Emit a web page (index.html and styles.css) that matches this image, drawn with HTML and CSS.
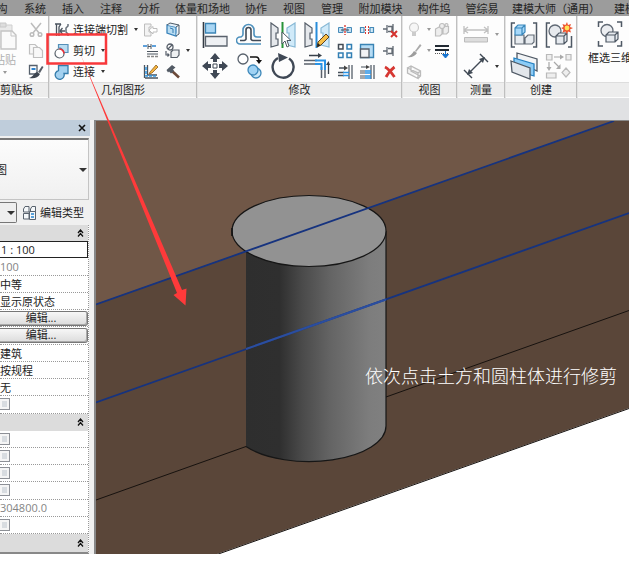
FILE: index.html
```html
<!DOCTYPE html>
<html lang="zh-CN">
<head>
<meta charset="utf-8">
<title>修改</title>
<link rel="stylesheet" href="styles.css">
</head>
<body>
<div class="app">
  <nav class="tabs">
    <a class="tab c1" href="#">构</a><a class="tab" href="#">系统</a><a class="tab" href="#">插入</a><a class="tab" href="#">注释</a><a class="tab" href="#">分析</a><a class="tab c5" href="#">体量和场地</a><a class="tab" href="#">协作</a><a class="tab" href="#">视图</a><a class="tab" href="#">管理</a><a class="tab c4" href="#">附加模块</a><a class="tab c3" href="#">构件坞</a><a class="tab c3" href="#">管综易</a><a class="tab c8" href="#">建模大师（通用）</a><a class="tab" href="#">建模</a>
  </nav>

  <div class="ribbon">
    <section class="panel clip">
      <div class="body">
        <button class="paste">
          <svg width="20" height="32" viewBox="0 0 20 32"><path d="M0 6H12V28H0" fill="#e9e9e9" stroke="#cfcfcf"/><path d="M0 4H6V8H0Z" fill="#ddd" stroke="#c8c8c8"/><path d="M1 12H12L16 16V30H1Z" fill="#fafafa" stroke="#c4c4c4" stroke-width="1.4"/><path d="M11 12V17H16" fill="none" stroke="#c4c4c4"/></svg>
          <span>粘贴</span><i class="dd dim"></i>
        </button>
        <div class="stack">
          <button aria-label="剪切到剪贴板"><svg width="16" height="16"><g fill="none" stroke="#bcbcbc" stroke-width="1.5"><path d="M3 1L11 11M13 1L5 11"/><circle cx="4" cy="12.5" r="1.8"/><circle cx="12" cy="12.5" r="1.8"/></g></svg></button>
          <button aria-label="复制到剪贴板"><svg width="16" height="16"><g fill="#f8f8f8" stroke="#c0c0c0" stroke-width="1.2"><path d="M1.5 1.5H7L10 4.500V11H1.500Z"/><path d="M5.500 4.500H11.500L14.500 7.500V14.500H5.500Z"/></g></svg></button>
          <button aria-label="匹配类型"><svg width="16" height="16"><path d="M1.500 1.500H9V10H1.500Z" fill="#fff" stroke="#56606c" stroke-width="1.300"/><path d="M3.500 4H7.500V6H3.500Z" fill="#2b82cf"/><path d="M10 8L14 2L15.500 3L12 9Z" fill="#555c66"/><path d="M9 8L12 10C10 14 6 15 1 14C5 13 6 9 9 8Z" fill="#3e4651"/></svg></button>
        </div>
      </div>
      <h2>剪贴板</h2>
    </section>

    <section class="panel geometry">
      <div class="body">
        <div class="stack labelled">
          <button><svg width="16" height="16"><path d="M1 2H7M2.500 2V14M5 14V5L7 2" fill="none" stroke="#4a535e" stroke-width="1.300"/><path d="M6 9H11M8.500 6L6 9L8.500 12" stroke="#4a535e" fill="none" stroke-width="1.300"/><path d="M14 2V4L12 6V10L14 12V14" stroke="#666f79" fill="none" stroke-width="1.500"/></svg><span>连接端切割</span><i class="dd"></i></button>
          <button><svg width="16" height="16"><path d="M4.500 1.500H14V9.500H9.500A4.500 4.500 0 0 0 4.500 5Z" fill="#b9dcf1" stroke="#548fb8" stroke-width="1.200"/><circle cx="5.500" cy="10.500" r="4.500" fill="#fff" stroke="#59626b" stroke-width="1.200"/><path d="M5.500 6A4.500 4.500 0 0 1 10 10.500" fill="none" stroke="#ef3038" stroke-width="1.600"/></svg><span>剪切</span><i class="dd"></i></button>
          <button><svg width="16" height="16"><path d="M4.500 6.500V1.500H14V9.500H10A4.500 4.500 0 1 1 4.500 6.500Z" fill="#a3d1f0" stroke="#347cab" stroke-width="1.300"/></svg><span>连接</span><i class="dd"></i></button>
        </div>
        <div class="stack mid">
          <button aria-label="连接端"><svg width="16" height="16"><path d="M1.500 2H8V5H6V10H8V14H1.500Z" fill="#f3f3f3" stroke="#bdbdbd"/><path d="M6 8L10 4.500V6.500H14V10H10V12Z" fill="#fff" stroke="#bdbdbd"/></svg></button>
          <button aria-label="梁柱连接"><svg width="16" height="16"><path d="M5 1V6M8 1V6M5 3.500H8" fill="none" stroke="#4d5660"/><path d="M0 3H4M13 3H9" stroke="#2b82cf" stroke-width="1.500"/><path d="M4 8.500H15M4 11H15" stroke="#4d5660"/><path d="M4 13.500H15" stroke="#888" stroke-width="1.500" stroke-dasharray="3 1"/></svg></button>
          <button aria-label="墙连接"><svg width="16" height="16"><path d="M1.500 1V14M4.500 1V11H14M2 14H15" fill="none" stroke="#4b5560" stroke-width="1.300"/><path d="M3 3V12H13" fill="none" stroke="#3298e1" stroke-width="1.500" stroke-dasharray="3 1"/><path d="M7 8L13 1L15 3L9 9L6 10Z" fill="#f6b440" stroke="#8d621f" stroke-width=".8"/></svg></button>
        </div>
        <div class="stack end">
          <button aria-label="拆分面"><svg width="16" height="16"><path d="M2 3L11 5V14L2 11Z" fill="#b9dcf1" stroke="#3983bb" stroke-width="1.300"/><path d="M2 3L5 1L14 3L11 5M14 3V12L11 14" fill="#e3eff8" stroke="#4e5b66"/><path d="M5 6L8 7V11" fill="none" stroke="#367eb5"/></svg></button>
          <button aria-label="填色"><svg width="16" height="16"><circle cx="5" cy="4" r="3" fill="#fff" stroke="#555d68" stroke-width="1.300"/><path d="M3 6L7 2M1 8V12H4M2.500 10.500L4 12L2.500 13.500" fill="none" stroke="#555d68" stroke-width="1.200"/><path d="M6 9L8 7H14V12L12 14.500H6Z" fill="#eef0f2" stroke="#555d68" stroke-width="1.200"/></svg><i class="dd"></i></button>
          <button aria-label="拆除"><svg width="16" height="16"><path d="M7 7L14 13.500" stroke="#6c4a3a" stroke-width="2.600"/><path d="M1.500 6L7 1L10.500 3.500L8 5.500L9 7L6 9.500L4 7.500L3 8.500Z" fill="#535b65"/></svg></button>
        </div>
      </div>
      <h2>几何图形</h2>
    </section>

    <section class="panel modify">
      <div class="body">
        <div class="bigs">
          <button aria-label="对齐"><svg width="26" height="26"><path d="M1.500 0V26" stroke="#343b44" stroke-width="1.600"/><path d="M3.500 1.500H13.500V11H3.500Z" fill="#a9d6f4" stroke="#3b84b5" stroke-width="1.300"/><path d="M3.500 14.500H25V24H3.500Z" fill="#eef0f3" stroke="#59616c" stroke-width="1.300"/></svg></button>
          <button aria-label="偏移"><svg width="26" height="26"><path d="M25 15H21A3 3 0 0 1 18 12V8A5.500 5.500 0 0 0 7 8V12A3 3 0 0 1 5 15H4A3.500 3.500 0 0 0 4 22H25" fill="none" stroke="#4e91bd" stroke-width="1.600"/><path d="M25 18.500H17A2 2 0 0 1 15 16V8A2.500 2.500 0 0 0 10 8V16A2 2 0 0 1 8 18.500H4" fill="none" stroke="#424b57" stroke-width="1.600"/></svg></button>
          <button aria-label="镜像 - 拾取轴"><svg width="26" height="26"><path d="M1 1L8 6V11H6V17H8V23L1 25Z" fill="#e5e8ec" stroke="#555e69" stroke-width="1.200"/><path d="M25 1L17 6V11H19V17H17V23L25 25Z" fill="#d0eaf9" stroke="#87b8d5" stroke-width="1.200"/><path d="M12.500 0V26" stroke="#279338" stroke-width="2"/><path d="M12 10V22L15 19L17 25L19 24L17 18.500H21Z" fill="#fff" stroke="#505863"/></svg></button>
          <button aria-label="镜像 - 绘制轴"><svg width="26" height="26"><path d="M1 1L8 6V11H6V17H8V23L1 25Z" fill="#e5e8ec" stroke="#555e69" stroke-width="1.200"/><path d="M25 1L17 6V11H19V17H17V23L25 25Z" fill="#d0eaf9" stroke="#87b8d5" stroke-width="1.200"/><path d="M12.500 0V26" stroke="#278cda" stroke-width="2"/><path d="M13 25L14 20L22 12L25 15L17 23Z" fill="#f7bf48" stroke="#5b4222"/><path d="M13 25L14 21L16.500 23.500Z" fill="#222"/></svg></button>
          <button aria-label="移动"><svg width="26" height="26"><path d="M13 0L18 6H15V9H11V6H8ZM13 26L18 20H15V17H11V20H8ZM0 13L6 8V11H9V15H6V18ZM26 13L20 8V11H17V15H20V18Z" fill="#3f4855"/><path d="M11 11H15V15H11Z" fill="#fff" stroke="#3f4855"/></svg></button>
          <button aria-label="复制"><svg width="26" height="26"><circle cx="7" cy="6" r="5" fill="#fff" stroke="#58616c" stroke-width="1.300"/><path d="M14 4H20Q23 4 23 8" fill="none" stroke="#111" stroke-width="1.600"/><path d="M20 7H26L23 11Z" fill="#111"/><circle cx="20" cy="20" r="5" fill="#c8e6f8" stroke="#3c87b9" stroke-width="1.300"/><circle cx="17" cy="17" r="5" fill="#9fd2f4" stroke="#3c87b9" stroke-width="1.300"/></svg></button>
          <button aria-label="旋转"><svg width="26" height="26"><path d="M8 5A10.500 10.500 0 1 0 19 5.500" fill="none" stroke="#3f4855" stroke-width="2.400"/><path d="M8 0L18 4.500L9 9Z" fill="#3f4855"/></svg></button>
          <button aria-label="修剪/延伸为角"><svg width="26" height="26"><path d="M0 7.500H13M0 11H13M17.500 14V25M21 14V25" stroke="#59616c" stroke-width="1.500"/><path d="M11 7.500H21V17M11 11H17.500V17" fill="none" stroke="#2993e5" stroke-width="2"/><path d="M5 2.500H15M24.500 21V11" stroke="#38414b" stroke-width="1.300"/><path d="M14 0L18 2.500L14 5ZM22 12L24.500 8L26 12Z" fill="#38414b"/></svg></button>
        </div>
        <div class="smalls">
          <button aria-label="拆分图元"><svg width="16" height="16"><path d="M1.500 5.500H6V10.500H1.500ZM10 5.500H14.500V10.500H10Z" fill="#c2e0f3" stroke="#478bb9"/><path d="M4 8H12" stroke="#3b4b5b"/><path d="M8 3V13" stroke="#db3932" stroke-width="1.400" stroke-dasharray="2 1"/></svg></button>
          <button aria-label="用间隙拆分"><svg width="16" height="16"><path d="M5 5.500H1.500V10.500H5ZM11 5.500H14.500V10.500H11Z" fill="#d3eaf7" stroke="#478bb9" stroke-width="1.200"/><path d="M6.500 4V12M9.500 4V12" stroke="#db3932" stroke-dasharray="2 1"/></svg></button>
          <button aria-label="解锁"><svg width="16" height="16"><path d="M1 7H5M5 3V11M6 4.500H10V9.500H6M11 2V11" fill="none" stroke="#626a73" stroke-width="1.300"/><path d="M9 9L15 15M15 9L9 15" stroke="#d5322e" stroke-width="2"/></svg></button>
          <button aria-label="阵列"><svg width="16" height="16"><g fill="#fff" stroke="#327fb4" stroke-width="1.500"><path d="M1.500 1.500H6V6H1.500Z" stroke="#424b55"/><path d="M10 1.500H14.500V6H10ZM1.500 10H6V14.500H1.500ZM10 10H14.500V14.500H10Z"/></g></svg></button>
          <button aria-label="缩放"><svg width="16" height="16"><path d="M1.500 1.500H14.500V14.500H1.500Z" fill="#b6dcf5" stroke="#3983b4" stroke-width="1.400"/><path d="M1.500 6H10V14.500H1.500Z" fill="#f1f2f4" stroke="#575f69" stroke-width="1.300"/></svg></button>
          <button aria-label="锁定"><svg width="16" height="16"><path d="M1 8H5M5 4V12M6 5.500H10V10.500H6M11 3V13" fill="none" stroke="#626a73" stroke-width="1.300"/></svg></button>
          <button aria-label="修剪单个图元"><svg width="16" height="16"><path d="M12 1V15M15 1V15" stroke="#56606b" stroke-width="1.300"/><path d="M1 8.500H7M1 11.500H7M2 4H8" stroke="#46505b" stroke-width="1.300"/><path d="M6 8.500H12M6 11.500H12" stroke="#2993e5" stroke-width="1.500"/><path d="M7 1.500L11 4L7 6.500Z" fill="#444"/></svg></button>
          <button aria-label="修剪多个图元"><svg width="16" height="16"><path d="M12 1V15M15 1V15" stroke="#56606b" stroke-width="1.300"/><path d="M1 7H6M1 9H6M1 12H6M1 14H6M2 3H8" stroke="#46505b"/><path d="M6 7H12M6 9H12M6 12H12M6 14H12" stroke="#2993e5" stroke-width="1.300"/><path d="M7 1L11 3L7 5Z" fill="#444"/></svg></button>
          <button aria-label="删除"><svg width="16" height="16"><path d="M3 3Q7 5 12.500 13M12.500 3Q7 7 4 13" fill="none" stroke="#d63732" stroke-width="2.800"/></svg></button>
        </div>
      </div>
      <h2>修改</h2>
    </section>

    <section class="panel view">
      <div class="body">
        <div class="stack">
          <button aria-label="隐藏"><svg width="16" height="16"><circle cx="8" cy="5.500" r="4.500" fill="#f6f6f6" stroke="#c8c8c8" stroke-width="1.200"/><path d="M6 10H10V14H6Z" fill="#ccc"/></svg><i class="dd dim"></i></button>
          <button aria-label="替换图形"><svg width="16" height="16"><path d="M9 8L14 1L15.500 2.500L10 9Z" fill="#aaa"/><path d="M8 8L11 10Q8 15 1 14Q5 13 8 8Z" fill="#9d9d9d"/></svg><i class="dd dim"></i></button>
          <button aria-label="选择框"><svg width="16" height="16"><path d="M1.500 4V9L12 14.500V9ZM1.500 4L5 2L14.500 7V12L12 14.500M12 9L14.500 7M5 2V7L14 12" fill="#f4f4f4" stroke="#bbb" stroke-width="1.300"/></svg></button>
        </div>
        <div class="stack">
          <button aria-label="置换图元"><svg width="16" height="16"><g fill="#eee" stroke="#bebebe" stroke-width="1.200"><path d="M1.500 7L5 5H8V12L6 14H1.500ZM9 6L11 4.500H14.500V10L12.500 12H9Z"/><circle cx="8" cy="4" r="2.500"/><circle cx="12.500" cy="3" r="1.500"/></g></svg></button>
          <button aria-label="线处理"><svg width="16" height="16"><path d="M1 3H15M1 7H15" stroke="#222a33" stroke-width="2"/><path d="M1 10.500H15" stroke="#555" stroke-dasharray="1 1"/><path d="M11.500 8V12M8.500 11.500L11.500 15L14.500 11.500Z" fill="#1773cf" stroke="#1773cf"/></svg></button>
        </div>
      </div>
      <h2>视图</h2>
    </section>

    <section class="panel measure">
      <div class="body bigcol">
        <button aria-label="测量"><svg width="26" height="26"><path d="M1 8H25M1 4V12M25 4V12M5 5L1 8L5 11M21 5L25 8L21 11" fill="none" stroke="#c1c1c1" stroke-width="1.300"/><path d="M1.500 15.500H24.500V20H1.500Z" fill="#ddd" stroke="#bbb"/></svg><i class="dd dim"></i></button>
        <button aria-label="对齐尺寸标注"><svg width="26" height="26"><path d="M1 17L9 25M17 1L25 9M5 21L21 5" stroke="#414a55" stroke-width="1.400"/><path d="M4 22L6 16L10 20ZM22 4L16 6L20 10Z" fill="#414a55"/></svg><i class="dd"></i></button>
      </div>
      <h2>测量</h2>
    </section>

    <section class="panel create">
      <div class="body bigs">
        <button aria-label="创建部件"><svg width="28" height="26"><path d="M5 1H1.500V25H5M23 1H26.500V25H23" fill="none" stroke="#4f5965" stroke-width="1.500"/><path d="M5 13H14V22H5ZM15 16L18 13H24V20L22 22H15Z" fill="#e7ebef" stroke="#636c76" stroke-width="1.200"/><path d="M5 6L8 3H15V10L12 13H5ZM5 6H12V13M12 6L15 3" fill="#a7d9fa" stroke="#3a88bc" stroke-width="1.200"/></svg></button>
        <button aria-label="创建零件"><svg width="28" height="26"><path d="M5 1H1.500V25H5M23 25H26.500V14" fill="none" stroke="#4f5965" stroke-width="1.500"/><circle cx="10" cy="9" r="6" fill="#e7eaee" stroke="#616a75" stroke-width="1.300"/><path d="M11 14L14 11H22V19L19 22H11ZM11 14H19V22M19 14L22 11" fill="#e6eaef" stroke="#4f5965" stroke-width="1.200"/><path d="M22 0L23 3L26 2L25 5L28 6L25 7.500L26 10.500L23 9.500L22 12L20.500 9.500L17.500 10.500L18.500 7.500L16 6L18.500 5L17.500 2L20.500 3Z" fill="#ee5431"/><circle cx="22" cy="6" r="2.400" fill="#ffe456"/></svg></button>
        <button aria-label="创建组"><svg width="28" height="28"><path d="M7 1L27 7V19L23 17L7 12Z" fill="#f2f4f6" stroke="#4f5965" stroke-width="1.300"/><path d="M4 6L24 12V24L4 18Z" fill="#8cccf6" stroke="#2580c1" stroke-width="1.300"/><path d="M1 9L20 16V27L2 20Z" fill="#e2e6eb" stroke="#4f5965" stroke-width="1.300"/></svg></button>
        <button aria-label="创建类似实例"><svg width="28" height="26"><path d="M1.500 1.500H7V7H1.500ZM21 1.500H26V7H21ZM1.500 20H11V25H1.500ZM21 15L25 19.500L21 24L17 19.500Z" fill="#eee" stroke="#bababa" stroke-width="1.200"/><path d="M9 4H16M4 9V15M9 9L14 14" stroke="#a8a8a8" stroke-width="1.200"/><path d="M15 1.500L19 4L15 6.500ZM1.500 14L4 18L6.500 14ZM15.500 11V16H11Z" fill="#aaa"/></svg></button>
      </div>
      <h2>创建</h2>
    </section>

    <section class="panel last">
      <div class="body">
        <button class="box3d"><svg width="26" height="26"><path d="M6 1H1.500V6M20 1H24.500V6M6 25H1.500V20M20 25H24.500V20" fill="none" stroke="#4f5965" stroke-width="1.500"/><circle cx="10" cy="9.500" r="6" fill="#eceef1" stroke="#616a75" stroke-width="1.300"/><path d="M9 14L12 11H21V18L18 21H9ZM9 14H18V21M18 14L21 11" fill="#e6eaef" stroke="#4f5965" stroke-width="1.200"/></svg><span>框选三维</span></button>
      </div>
      <h2>&nbsp;</h2>
    </section>
  </div>

  <div class="options"></div>

  <main>
    <aside class="palette">
      <header><button aria-label="关闭"><svg width="8" height="8"><path d="M1 1L7 7M7 1L1 7" stroke="#111" stroke-width="1.600"/></svg></button></header>
      <button class="type"><span>图</span><i class="dd"></i></button>
      <div class="filter">
        <button class="combo" aria-label="类型过滤"><i class="dd"></i></button>
        <button class="edit-type"><svg width="16" height="16"><g fill="#f5f8fa" stroke="#59636e"><path d="M1.500 4L3 1.500H7V7H1.500ZM8.500 4L10 1.500H13.500V7H8.500ZM1.500 8.500H7V14H1.500Z"/><path d="M7.500 6.500H13.500V14.500H7.500Z"/></g><path d="M9 9H12M9 12H12" stroke="#2784cf" stroke-width="1.500"/></svg><span>编辑类型</span></button>
      </div>
      <div class="props">
        <button class="group" aria-label="折叠图形"><svg width="7" height="8"><path d="M1 4L3.500 1L6 4M1 7.500L3.500 4.500L6 7.500" fill="none" stroke="#111" stroke-width="1.300"/></svg></button>
        <input class="row active" aria-label="视图比例" value="1 : 100">
        <input class="row dimmed" aria-label="比例值" value="100" readonly>
        <input class="row" aria-label="详细程度" value="中等">
        <input class="row" aria-label="零件可见性" value="显示原状态">
        <div class="row push"><button>编辑...</button></div>
        <div class="row push"><button>编辑...</button></div>
        <input class="row" aria-label="规程" value="建筑">
        <input class="row" aria-label="显示隐藏线" value="按规程">
        <input class="row" aria-label="默认分析显示样式" value="无">
        <label class="row"><input type="checkbox" aria-label="日光路径"></label>
        <button class="group" aria-label="折叠范围"><svg width="7" height="8"><path d="M1 4L3.500 1L6 4M1 7.500L3.500 4.500L6 7.500" fill="none" stroke="#111" stroke-width="1.300"/></svg></button>
        <label class="row"><input type="checkbox" aria-label="裁剪视图"></label>
        <label class="row"><input type="checkbox" aria-label="裁剪区域可见"></label>
        <label class="row"><input type="checkbox" aria-label="注释裁剪"></label>
        <label class="row"><input type="checkbox" aria-label="远剪裁激活"></label>
        <input class="row dimmed" aria-label="远剪裁偏移" value="304800.0" readonly>
        <label class="row"><input type="checkbox" aria-label="剖面框"></label>
        <button class="group" aria-label="折叠相机"><svg width="7" height="8"><path d="M1 4L3.500 1L6 4M1 7.500L3.500 4.500L6 7.500" fill="none" stroke="#111" stroke-width="1.300"/></svg></button>
      </div>
    </aside>
    <div class="canvas">
      <svg viewBox="96 121 533 433" preserveAspectRatio="xMinYMin slice" role="img" aria-label="三维视图">
        <defs><linearGradient id="side"><stop offset="0" stop-color="#2e2e2e"/><stop offset=".24" stop-color="#2f2f2f"/><stop offset=".4" stop-color="#4a4a4a"/><stop offset=".6" stop-color="#646464"/><stop offset=".88" stop-color="#7d7d7d"/><stop offset="1" stop-color="#808080"/></linearGradient></defs>
        <path d="M96 121H629V554H96Z" fill="#fff"/>
        <path d="M96 121H629V408L217 554H96Z" fill="#5a4639"/>
        <path d="M96 121H614L96 304Z" fill="#705747"/>
        <path d="M629 408.500L217 554.500M96 500L246 446.500M386 397L629 310.500" stroke="#17120f" fill="none"/>
        <path d="M246 251V446.500A77 35.500 0 0 0 386 426V231Z" fill="url(#side)"/>
        <path d="M246 446.500A77 35.500 0 0 0 386 426V231" fill="none" stroke="#161616" stroke-width="1.200"/>
        <ellipse cx="309" cy="231" rx="77" ry="35.500" fill="#929292" stroke="#161616" stroke-width="1.200"/>
        <path d="M232 228V236" stroke="#111" stroke-width="1.500"/>
        <path d="M96 304.500L614 121M96 402.500L629 213" stroke="#16337f" stroke-width="1.800"/>
        <path d="M246 349L386 299.500" stroke="#2b4e9f" stroke-width="2"/>
      </svg>
      <p class="note">依次点击土方和圆柱体进行修剪</p>
    </div>
  </main>

  <svg class="callout" width="200" height="320" aria-hidden="true">
    <path d="M47.500 34.500H106V63.500H47.500Z" fill="none" stroke="#f8383b" stroke-width="2.500"/>
    <path d="M80 53L182 290L186.500 288.500L185.500 305.500L173.500 295L177 293Z" fill="#ff3a3a"/>
  </svg>
</div>
</body>
</html>
```
FILE: styles.css
```css
* { box-sizing: border-box; }
body {
  margin: 0;
  background: #fff;
  color: #222;
  font: 11px/14px "Open Sans", "Noto Sans CJK SC", sans-serif;
}
button, input { font: inherit; color: inherit; }
button { display: flex; align-items: center; justify-content: center; padding: 0; border: 0; background: none; }
svg { display: block; flex: none; }
h2, p { margin: 0; }

.app { position: relative; display: flex; flex-direction: column; height: calc(100vh - 12px); min-height: 500px; overflow: hidden; }

.tabs { display: flex; flex: none; height: 16px; overflow: hidden; background: #9c9c9c; }
.tab { flex: none; width: 38px; line-height: 18px; text-align: center; white-space: nowrap; color: #262626; text-decoration: none; }
.c1 { width: 28px; margin-left: -12px; }
.c3 { width: 48px; }
.c4 { width: 59px; }
.c5 { width: 69px; }
.c8 { width: 100px; }

.ribbon { display: flex; flex: none; height: 82px; overflow: hidden; background: #e3e3e3; }
.panel { display: flex; flex: none; flex-direction: column; margin-right: 1px; border-right: 1px solid #bfbfbf; background: #fdfdfd; }
.panel h2 { height: 15px; border-top: 1px solid #ddd; background: #ededed; font: inherit; text-align: center; white-space: nowrap; }
.body { display: flex; height: 66px; padding-top: 3px; }
.stack { display: grid; flex: 1; grid-template-rows: repeat(3, 21px); }
.stack button { gap: 5px; }
.clip { width: 49px; }
.clip h2 { padding-right: 17px; }
.clip .stack { flex: none; width: 24px; }
.paste { flex: 1; flex-direction: column; justify-content: flex-start; align-items: flex-start; color: #b0b0b0; gap: 1px; }
.paste span { margin-left: -6px; line-height: 15px; white-space: nowrap; }
.paste .dd { margin: 3px 0 0 3px; }
.geometry { width: 147px; }
.labelled { flex: none; width: 90px; }
.labelled button { justify-content: flex-start; padding-left: 4px; gap: 0; }
.labelled span { margin: 0 6px 0 3px; white-space: nowrap; }
.geometry .mid { flex: none; width: 22px; }
.end button { justify-content: flex-start; padding-left: 3px; }
.modify { width: 204px; }
.bigs { display: grid; grid-template-columns: repeat(4, 34px); grid-template-rows: 31px 32px; }
.smalls { display: grid; flex: 1; grid-template-columns: repeat(3, 1fr); grid-template-rows: repeat(3, 21px); }
.view { width: 54px; }
.view .stack button { justify-content: flex-start; padding-left: 3px; }
.measure { width: 47px; }
.bigcol { flex-direction: column; }
.bigcol button { flex: 1; gap: 6px; }
.create { width: 71px; }
.create .bigs { grid-template-columns: 1fr 1fr; }
.last { flex: 1; margin: 0; border: 0; min-width: 51px; }
.box3d { flex: none; flex-direction: column; justify-content: flex-start; gap: 4px; padding: 2px 0 0 10px; }
.box3d span { white-space: nowrap; }

.dd { flex: none; width: 0; border: 2px solid transparent; border-top: 3px solid #333; border-bottom: 0; }
.dd.dim { border-top-color: #999; }

.options { flex: none; height: 22px; background: #e0e1e3; }
main { display: flex; flex: 1; min-height: 0; }

.palette { display: flex; flex: none; flex-direction: column; width: 94px; padding-right: 4px; background: #f0f0f0; }
.palette header { display: flex; flex: none; justify-content: flex-end; height: 16px; padding-right: 4px; background: #bfcddb; }
.type { flex: none; justify-content: space-between; height: 62px; margin: 2px 1px 0 0; border: 1px solid #c4c4c4; border-top: 2px solid #777; border-left: 0; background: linear-gradient(#fcfcfc, #f0f0f0); }
.type span { margin-left: -4px; }
.type .dd, .combo .dd { border-width: 4px 4px 0; margin-right: 1px; }
.filter { display: flex; flex: none; align-items: center; height: 25px; gap: 5px; }
.combo { justify-content: flex-end; width: 17px; height: 21px; border: 1px solid #777; border-left: 0; border-radius: 0 2px 2px 0; background: #eee; }
.edit-type { gap: 2px; white-space: nowrap; }

.props {
  display: grid;
  flex: 1;
  min-height: 0;
  grid-template-rows: 16px repeat(10, minmax(0, 1fr)) 17px repeat(6, minmax(0, 1fr)) 18px;
  width: 89px;
  border-right: 1px dotted #999;
  border-bottom: 2px solid #888;
  background: #fff;
}
.group { justify-content: flex-end; padding-right: 4px; background: #dcdcdc; }
.row { display: flex; align-items: center; width: 100%; min-width: 0; height: 100%; padding: 0; border: 0; border-bottom: 1px dotted #999; border-radius: 0; background: #fff; outline: 0; }
.active { padding-left: 1px; border: 1px solid #222; border-left: 0; }
.dimmed { color: #858585; }
.push button { width: 100%; height: 15px; padding-right: 5px; border: 1px solid #777; border-left: 0; border-radius: 0 3px 3px 0; box-shadow: inset -1px -1px #aaa; background: linear-gradient(#f7f7f7, #dcdcdc); }
.row input { appearance: none; width: 10px; height: 12px; margin: 0; border: 1px solid #8d9096; border-left: 0; background: #d8dce0; box-shadow: inset 0 0 0 2px #f5f5f5; }

.canvas { position: relative; flex: 1; min-width: 0; overflow: hidden; border: solid #888; border-width: 1px 0 0 2px; }
.canvas > svg { width: 100%; height: 100%; }
.note { position: absolute; top: 242px; left: 269px; color: #fff; font: 300 18px/24px "Noto Sans CJK SC", sans-serif; white-space: nowrap; }
.callout { position: absolute; top: 0; left: 0; pointer-events: none; }
```
